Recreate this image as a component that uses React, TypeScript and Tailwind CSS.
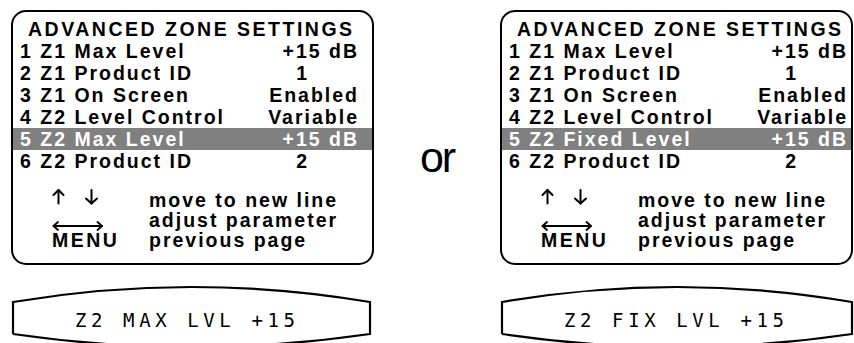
import React from "react";

type Row = { label: string; value: string; pad?: boolean; hl?: boolean };

function Panel({ rows, rowPr, cls }: { rows: Row[]; rowPr: string; cls: string }) {
  return (
    <div
      className={`${cls} border-2 border-black rounded-[15px] pt-[6px] pb-[13px] font-bold text-[19.5px] leading-[22px] text-black font-['Liberation_Sans',Arial,sans-serif]`}
    >
      <div className="pl-[15px] tracking-[2.5px] whitespace-pre">ADVANCED ZONE SETTINGS</div>
      {rows.map((r) => (
        <div
          key={r.label}
          className={`flex justify-between pl-[7px] ${rowPr} tracking-[2px] whitespace-pre ${
            r.hl ? "bg-[#808080] text-white" : ""
          }`}
        >
          <span>{r.label}</span>
          <span className={r.pad ? "pr-[50px]" : ""}>{r.value}</span>
        </div>
      ))}
      <div className="mt-[18px] pl-[39px] grid grid-cols-[97px_1fr] leading-[20px] tracking-[2px]">
        <div className="h-[20px]">
          <svg width="50" height="20" viewBox="0 0 50 20" className="overflow-visible">
            <g stroke="black" strokeWidth="2" fill="none" strokeLinecap="round" strokeLinejoin="round">
              <line x1="6.5" y1="0" x2="6.5" y2="13.5" />
              <polyline points="1.5,5 6.5,0 11.5,5" />
              <line x1="39.5" y1="0" x2="39.5" y2="13.5" />
              <polyline points="34,8.5 39.5,13.5 45,8.5" />
            </g>
          </svg>
        </div>
        <div className="whitespace-pre">move to new line</div>
        <div className="h-[20px]">
          <svg width="52" height="20" viewBox="0 0 52 20" className="overflow-visible">
            <g stroke="black" strokeWidth="1.8" fill="none" strokeLinecap="round" strokeLinejoin="round">
              <line x1="1.5" y1="16" x2="50" y2="16" />
              <polyline points="6,12 1.5,16 6,20" />
              <polyline points="45.5,12 50,16 45.5,20" />
            </g>
          </svg>
        </div>
        <div className="whitespace-pre">adjust parameter</div>
        <div className="tracking-[2.5px]">MENU</div>
        <div className="whitespace-pre">previous page</div>
      </div>
    </div>
  );
}

function Lcd({ text, w, cls }: { text: string; w: number; cls: string }) {
  const mid = (w / 2).toFixed(1);
  const r = w - 1;
  return (
    <div className={`${cls} relative h-[66px] ml-[1px] mt-[19px] pl-[63px] pt-[26px]`}>
      <svg
        className="absolute left-0 top-0 overflow-visible"
        width={w}
        height={66}
        viewBox={`0 0 ${w} 66`}
      >
        <path
          d={`M1 50 L1 18 Q${mid} -12 ${r} 18 L${r} 50 Q${mid} 76 1 50`}
          stroke="black"
          strokeWidth="2.2"
          fill="none"
          strokeLinejoin="miter"
        />
      </svg>
      <div className="relative whitespace-pre font-['DejaVu_Sans_Mono',monospace] text-[19px] leading-[20px] tracking-[4.6px] text-black">
        {text}
      </div>
    </div>
  );
}

export default function App() {
  const left: Row[] = [
    { label: "1 Z1 Max Level", value: "+15 dB" },
    { label: "2 Z1 Product ID", value: "1", pad: true },
    { label: "3 Z1 On Screen", value: "Enabled" },
    { label: "4 Z2 Level Control", value: "Variable" },
    { label: "5 Z2 Max Level", value: "+15 dB", hl: true },
    { label: "6 Z2 Product ID", value: "2", pad: true },
  ];
  const right: Row[] = [
    { label: "1 Z1 Max Level", value: "+15 dB" },
    { label: "2 Z1 Product ID", value: "1", pad: true },
    { label: "3 Z1 On Screen", value: "Enabled" },
    { label: "4 Z2 Level Control", value: "Variable" },
    { label: "5 Z2 Fixed Level", value: "+15 dB", hl: true },
    { label: "6 Z2 Product ID", value: "2", pad: true },
  ];
  return (
    <div className="w-[854px] h-[343px] overflow-hidden bg-white flex items-start pt-[10px] pl-[11px]">
      <div className="w-[363px] flex flex-col">
        <Panel rows={left} rowPr="pr-[13px]" cls="w-[363px]" />
        <Lcd text="Z2 MAX LVL +15" w={359} cls="w-[359px]" />
      </div>
      <div className="w-[126px] flex justify-center pt-[126px] text-[43px] leading-[43px] tracking-[-2px] font-normal text-black font-['Liberation_Sans',Arial,sans-serif]">
        or
      </div>
      <div className="w-[353px] flex flex-col">
        <Panel rows={right} rowPr="pr-[3px]" cls="w-[353px]" />
        <Lcd text="Z2 FIX LVL +15" w={352} cls="w-[352px]" />
      </div>
    </div>
  );
}
